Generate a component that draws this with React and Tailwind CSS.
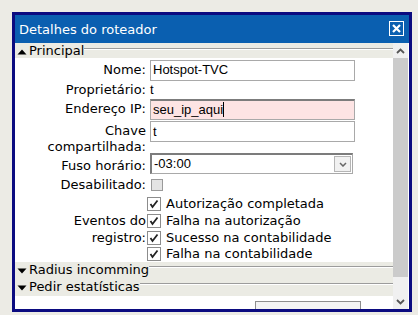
const font = { fontFamily: '"DejaVu Sans", Verdana, sans-serif' };
const arial = { fontFamily: '"Liberation Sans", Arial, sans-serif' };

const Check = ({ checked }) => (
  <svg width="14" height="14" viewBox="0 0 14 14" className="shrink-0">
    <rect x="0.5" y="0.5" width="13" height="13" fill="#fff" stroke="#8c8c8c" />
    {checked && (
      <path d="M3.5 7 L5.5 10 L10.5 3.5" fill="none" stroke="#222" strokeWidth="1.8" />
    )}
  </svg>
);

const Section = ({ open, title, h = 'h-[17px]', line = 'mt-[4px]' }) => (
  <div className={`flex ${h} bg-[#ebebe4] items-start text-[13px] leading-[15px] text-black`}>
    <svg width="10" height="6" viewBox="0 0 10 6" className="ml-[2px] mr-[2px] mt-[6px] shrink-0">
      {open ? <path d="M0.5 5.5 L5 0.5 L9.5 5.5 Z" fill="#000" /> : <path d="M0.5 0.5 L9.5 0.5 L5 5.5 Z" fill="#000" />}
    </svg>
    <span className="whitespace-nowrap">{title}</span>
    <div className={`flex-1 h-[2px] ${line} border-t border-[#9c9c9c] border-b border-b-white`} />
  </div>
);

const Label = ({ children, className = '' }) => (
  <div className={`w-[131px] shrink-0 text-right ${className}`}>{children}</div>
);

const Field = ({ value, className = '' }) => (
  <div
    className={`ml-[4px] w-[205px] h-[21px] border border-[#a9a9a9] px-[2px] flex items-center text-[13px] ${className}`}
    style={arial}
  >
    {value}
  </div>
);

export default function App() {
  const eventos = [
    'Autorização completada',
    'Falha na autorização',
    'Sucesso na contabilidade',
    'Falha na contabilidade',
  ];

  return (
    <div className="w-[418px] h-[315px] bg-[#ecebe5] pt-[12px] pl-[12px] overflow-hidden" style={font}>
      <div className="w-[400px] h-[300px] border-[3px] border-[#0b0b80] flex flex-col bg-white">
        {/* barra de título */}
        <div className="h-[28px] shrink-0 bg-[#0a5fb0] flex items-center justify-between pl-[4px] pr-[5px] text-white text-[13px]">
          <span className="mt-[2px]">Detalhes do roteador</span>
          <div className="w-[15px] h-[15px] border border-white flex items-center justify-center -mt-[2px]">
            <svg width="9" height="9" viewBox="0 0 9 9">
              <path d="M1 1 L8 8 M8 1 L1 8" stroke="#fff" strokeWidth="2.2" />
            </svg>
          </div>
        </div>

        <div className="flex flex-1 overflow-hidden">
          <div className="w-[378px] shrink-0 text-[13px] text-black overflow-hidden">
            <Section open title="Principal" h="h-[15px]" line="mt-[5px]" />

            <div className="flex h-[24px] items-center">
              <Label>Nome:</Label>
              <Field value="Hotspot-TVC" />
            </div>

            <div className="flex h-[16px] items-center">
              <Label>Proprietário:</Label>
              <span className="ml-[4px]" style={arial}>t</span>
            </div>

            <div className="flex h-[22px] items-center">
              <Label>Endereço IP:</Label>
              <Field
                className="border-t-2 border-t-[#7c7c7c] bg-[#fde4e4]"
                value={
                  <>
                    <span>seu_ip_aqui</span>
                    <span className="w-[1px] h-[15px] bg-black" />
                  </>
                }
              />
            </div>

            <div className="flex h-[33px] items-start">
              <Label className="pt-[3px] leading-[16px]">
                Chave
                <br />
                compartilhada:
              </Label>
              <Field className="mt-[1px]" value="t" />
            </div>

            <div className="flex h-[22px] items-start">
              <Label className="pt-[3px]">Fuso horário:</Label>
              <div
                className="ml-[4px] w-[203px] h-[21px] border border-[#a9a9a9] border-l-2 border-l-[#7c7c7c] border-t-2 border-t-[#7c7c7c] flex items-center justify-between pl-[2px] pr-[1px]"
                style={arial}
              >
                <span>-03:00</span>
                <div className="w-[17px] h-[16px] border border-[#b5b5b5] bg-[#f1f1f1] flex items-center justify-center">
                  <svg width="8" height="5" viewBox="0 0 8 5">
                    <path d="M1 1 L4 4 L7 1" fill="none" stroke="#666" strokeWidth="1.5" />
                  </svg>
                </div>
              </div>
            </div>

            <div className="flex h-[20px] items-center">
              <Label>Desabilitado:</Label>
              <div className="ml-[5px] w-[12px] h-[12px] border border-[#9a9a9a] bg-[#e4e4e4]" />
            </div>

            <div className="flex h-[67px] items-center">
              <Label className="leading-[17px]">
                Eventos do
                <br />
                registro:
              </Label>
              <div className="ml-[1px] flex flex-col">
                {eventos.map((ev, i) => (
                  <div key={ev} className={`flex items-center gap-[5px] ${i === 3 ? 'h-[16px]' : 'h-[17px]'}`}>
                    <Check checked />
                    <span>{ev}</span>
                  </div>
                ))}
              </div>
            </div>

            <Section title="Radius incomming" />
            <Section title="Pedir estatísticas" />

            <div className="flex pt-[5px] pl-[240px]">
              <div className="w-[106px] h-[22px] border border-[#8e8e8e] bg-[#f4f4f4]" />
            </div>
          </div>

          {/* barra de rolagem */}
          <div className="w-[15px] shrink-0 flex flex-col bg-[#f0f0f0]">
            <div className="h-[15px] flex items-center justify-center">
              <svg width="9" height="6" viewBox="0 0 9 6">
                <path d="M1 5 L4.5 1.5 L8 5" fill="none" stroke="#555" strokeWidth="1.8" />
              </svg>
            </div>
            <div className="h-[219px] bg-[#cbcbcb]" />
            <div className="flex-1" />
            <div className="h-[15px] flex items-center justify-center">
              <svg width="9" height="6" viewBox="0 0 9 6">
                <path d="M1 1 L4.5 4.5 L8 1" fill="none" stroke="#555" strokeWidth="1.8" />
              </svg>
            </div>
          </div>
        </div>
      </div>
    </div>
  );
}
